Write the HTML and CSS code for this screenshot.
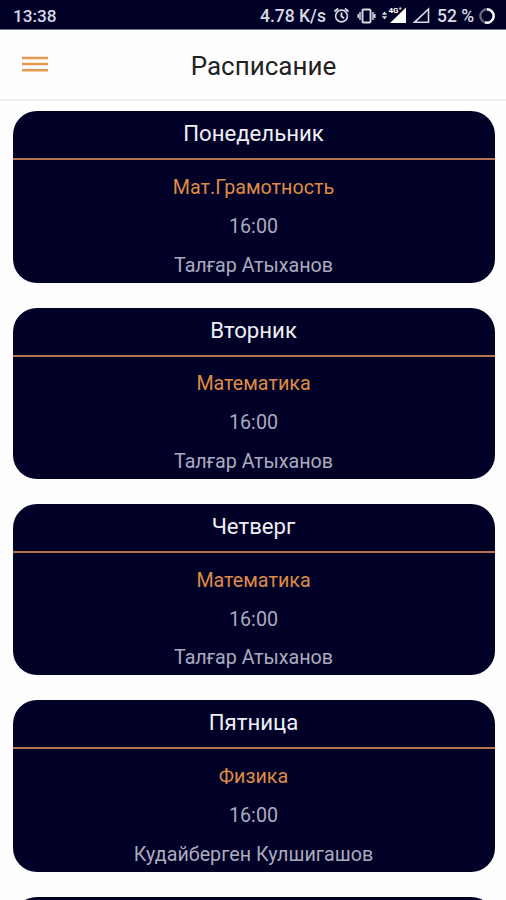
FILE: index.html
```html
<!DOCTYPE html>
<html lang="ru">
<head>
<meta charset="utf-8">
<title>Расписание</title>
<link rel="stylesheet" href="styles.css">
</head>
<body>
<div class="status">
  <span class="clock">13:38</span>
  <span class="speed">4.78 K/s</span>
  <svg class="icons" width="94" height="20" viewBox="336 6 94 20" fill="none" stroke="#d9d9e4" stroke-width="1.6">
    <circle cx="341.5" cy="16" r="5.9"/>
    <path d="M334.5 11.5l3.6-3M348.5 11.5l-3.6-3M341.5 12.5v4l2.6 1.6" stroke-width="1.9"/>
    <rect x="362.5" y="9.5" width="8" height="13" rx="1" stroke-width="1.9"/>
    <path d="M360 12v8M373 12v8M358.200 14v4M374.800 14v4" stroke-width="1.500"/>
    <path d="M381.800 14.800l2.700-3.300 2.700 3.300zM381.800 16.200l2.700 3.300 2.700-3.300z" fill="#d9d9e4" stroke="none"/>
    <path d="M406 7.500v15.500h-16z" fill="#fff" stroke="none"/>
    <path d="M428.500 9v13.300h-14z" stroke-width="1.600"/>
    <text class="network" x="388.500" y="13">4G⁺</text>
  </svg>
  <span class="battery">52 %</span>
  <svg class="ring" width="18" height="18" viewBox="0 0 18 18" fill="none" stroke-width="2.400">
    <circle cx="9" cy="9" r="6.700" stroke="#66667c"/>
    <path d="M9 2.300a6.700 6.700 0 1 1-2 13.100" stroke="#fff"/>
  </svg>
</div>
<header class="bar">
  <svg class="menu" width="26" height="18" viewBox="0 0 26 18" stroke="#e39a50" stroke-width="2.500">
    <path d="M0 3h26M0 9h26M0 15.200h26"/>
  </svg>
  <h1 class="title">Расписание</h1>
</header>
<main class="list">
  <section class="card"><h2 class="day">Понедельник</h2><div class="lesson"><p class="subject">Мат.Грамотность</p><p>16:00</p><p>Талғар Атыханов</p></div></section>
  <section class="card"><h2 class="day">Вторник</h2><div class="lesson"><p class="subject">Математика</p><p>16:00</p><p>Талғар Атыханов</p></div></section>
  <section class="card"><h2 class="day">Четверг</h2><div class="lesson"><p class="subject">Математика</p><p>16:00</p><p>Талғар Атыханов</p></div></section>
  <section class="card"><h2 class="day">Пятница</h2><div class="lesson"><p class="subject">Физика</p><p>16:00</p><p>Кудайберген Кулшигашов</p></div></section>
  <section class="card"></section>
</main>
</body>
</html>
```
FILE: styles.css
```css
* { box-sizing: border-box; }
html { overflow: hidden; }
body {
  margin: 0;
  height: 900px;
  overflow: hidden;
  background: #fefefe;
  font-family: Roboto, sans-serif;
}
h1, h2, p { margin: 0; font-weight: 400; }
.status {
  display: flex;
  align-items: center;
  height: 30px;
  padding: 2px 9px 0 13px;
  background: #010128;
  border-bottom: 1px solid #77777f;
  color: #d9d9e4;
  font-size: 17.5px;
  font-weight: 500;
  white-space: nowrap;
}
.clock { flex: none; width: 247px; font-size: 17.2px; }
.speed { flex: none; width: 73px; }
.icons { overflow: visible; margin-left: 3px; flex: none; }
.network { font-size: 8px; font-weight: 700; fill: #fff; stroke: #010128; stroke-width: 1px; paint-order: stroke; }
.battery { flex: none; width: 41px; margin-left: 7px; }
.ring { flex: none; }
.bar {
  display: grid;
  grid-template-columns: 26px 1fr 26px;
  align-items: center;
  height: 71px;
  padding: 0 22px;
  border-bottom: 2px solid #eeeff0;
}
.menu { margin-top: -1px; }
.title {
  padding: 3px 0 0 21px;
  text-align: center;
  color: #222;
  font-size: 26px;
}
.list {
  display: flex;
  flex-direction: column;
  gap: 25px;
  height: 799px;
  overflow: hidden;
  padding: 10.300px 11.500px 0 12.500px;
}
.card {
  flex: none;
  height: 171.400px;
  border-radius: 24px;
  background: #010128;
  overflow: hidden;
  text-align: center;
}
.day {
  height: 49px;
  border-bottom: 2px solid #b4734f;
  color: #efeff5;
  font-size: 22.200px;
  line-height: 44px;
}
.lesson {
  padding-top: 8.700px;
  color: #ababbd;
  font-size: 19.700px;
  line-height: 38.850px;
}
.subject { color: #df8b45; }
```
